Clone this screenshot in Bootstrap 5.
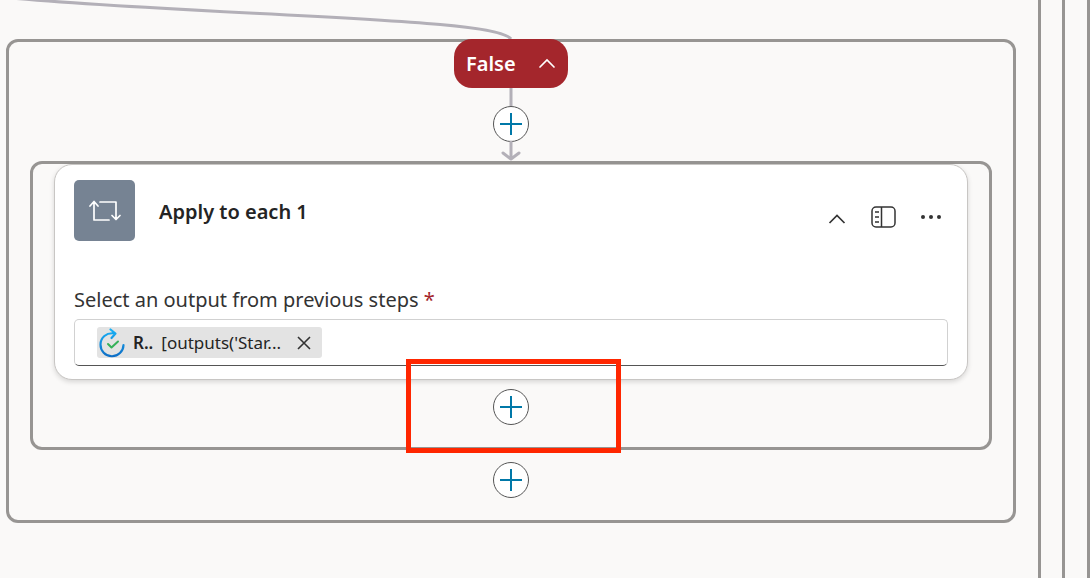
<!DOCTYPE html>
<html lang="en">
<head>
<meta charset="utf-8">
<meta name="viewport" content="width=device-width, initial-scale=1">
<title>Flow designer</title>
<link href="https://cdn.jsdelivr.net/npm/bootstrap@5.3.0/dist/css/bootstrap.min.css" rel="stylesheet">
<style>
  body { background: #faf9f8; color: #242424; font-family: "Noto Sans", "Open Sans", sans-serif; font-size: 20px; line-height: 28px; }
  svg { display: block; overflow: visible; }
  .parent-scope { border-right: 3px solid #979593; padding-right: 22px; }
  .parent-scope .parent-scope { padding-right: 21px; }
  .parent-scope .parent-scope .parent-scope { padding-right: 22px; }
  .branch { padding-left: 6px; }
  .incoming { height: 39px; }
  .scope { border: 3px solid #979593; border-radius: 12px; padding: 0 21px 22px; }
  .edge-line { stroke: #b3b0b8; stroke-width: 3; fill: none; }
  .btn-false { --bs-btn-bg: #a4262c; --bs-btn-color: #fff; --bs-btn-hover-bg: #8e2026; --bs-btn-hover-color: #fff; --bs-btn-border-width: 0; --bs-btn-font-size: 20px; --bs-btn-font-weight: 600; --bs-btn-line-height: 28px; width: 114px; height: 49px; border-radius: 18px; padding: 0 13px 0 12px; margin-top: -3px; }
  .btn-add { width: 36px; height: 36px; background: #fff; border: 1px solid #555; color: #0078a8; }
  .after-step { margin-top: 9px; }
  .after-scope { margin-top: 12px; }
  .step { border: 1px solid #c8c6c4; border-radius: 18px; padding: 15px 19px 13px; box-shadow: 0 2px 5px rgba(0,0,0,.14); }
  .step-icon { width: 61px; height: 61px; border-radius: 5px; background: #768393; }
  .step-title { font-size: 20px; line-height: 28px; font-weight: 600; margin-left: 24px; padding-top: 2px; }
  .tools { gap: 13px; }
  .tool { width: 34px; height: 32px; color: #333; }
  .field-label { margin-top: 45px; margin-bottom: 5px; color: #333; }
  .required { color: #a4262c; }
  .token-field { height: 47px; border: 1px solid #d1d1d1; border-bottom-color: #555; border-radius: 5px; padding: 0 22px; }
  .token { width: 225px; height: 31px; background: #e3e3e3; border-radius: 3px; padding: 0 11px 0 2px; font-size: 17px; line-height: 24px; white-space: nowrap; }
  .token-input { min-width: 0; outline: 0; }
  .highlight { width: 215px; height: 94px; top: -30px; left: -87px; border: 5px solid #ff2600; pointer-events: none; }
</style>
</head>
<body>
<div class="parent-scope min-vh-100 d-flex">
 <div class="parent-scope flex-grow-1 d-flex">
  <div class="parent-scope flex-grow-1">
   <main class="branch">
    <div class="incoming">
      <svg class="w-50 h-100" viewBox="0 0 506 39" preserveAspectRatio="none" aria-hidden="true"><path class="edge-line" d="M-6-3C130 10 330 15 435 24.500Q499 30 506 39"/></svg>
    </div>
    <section class="scope d-flex flex-column align-items-center">
      <button class="btn btn-false d-flex align-items-center justify-content-between" type="button" aria-expanded="true">False
        <svg width="16" height="12" fill="none" stroke="currentColor" stroke-width="1.7" stroke-linecap="round"><path d="m1 9 7-7 7 7"/></svg>
      </button>
      <svg width="36" height="18" aria-hidden="true"><path class="edge-line" d="M18 0v18"/></svg>
      <button class="btn btn-add rounded-circle p-0 d-flex align-items-center justify-content-center" type="button" aria-label="Add an action">
        <svg width="22" height="22" stroke="currentColor" stroke-width="2"><path d="M11 0v22M0 11h22"/></svg>
      </button>
      <svg width="36" height="19" aria-hidden="true"><path class="edge-line" d="M18 0v17M10 11l8 6 8-6" stroke-linejoin="round" stroke-linecap="round"/></svg>

      <section class="scope w-100 d-flex flex-column align-items-center">
        <article class="step bg-white w-100">
          <header class="d-flex align-items-center">
            <div class="step-icon d-flex align-items-center justify-content-center">
              <svg width="32" height="22" fill="none" stroke="#fff" stroke-width="1.7" stroke-linecap="round" stroke-linejoin="round" aria-hidden="true"><path d="M1 6l4-4.500L9 6M5 2v18h15M11 2h16v17M23 15.500l4 4 4-4"/></svg>
            </div>
            <h1 class="step-title mb-0 me-auto">Apply to each 1</h1>
            <div class="tools d-flex mt-2 pt-1">
              <button class="btn tool p-0 border-0 d-flex align-items-center justify-content-center" type="button" aria-label="Collapse">
                <svg class="mt-1" width="16" height="10" fill="none" stroke="currentColor" stroke-width="1.7"><path d="m.5 9 7.500-7.500L15.500 9"/></svg>
              </button>
              <button class="btn tool p-0 border-0 d-flex align-items-center justify-content-center" type="button" aria-label="Open panel">
                <svg width="26" height="22" fill="none" stroke="currentColor" stroke-width="1.5"><rect x="1" y="1" width="23" height="20" rx="4"/><path d="M10.500 1v20M4 6h4M4 11h4M4 16h4"/></svg>
              </button>
              <button class="btn tool p-0 border-0 d-flex align-items-center justify-content-center" type="button" aria-label="More options">
                <svg width="20" height="4" fill="currentColor"><circle cx="2" cy="2" r="2"/><circle cx="10" cy="2" r="2"/><circle cx="18" cy="2" r="2"/></svg>
              </button>
            </div>
          </header>
          <label class="field-label d-block" for="source">Select an output from previous steps <span class="required">*</span></label>
          <div class="token-field d-flex align-items-center">
            <span class="token d-flex align-items-center flex-shrink-0">
              <svg width="26" height="30" fill="none" stroke-linecap="round" stroke-linejoin="round" aria-hidden="true">
                <defs><linearGradient id="ring" x1="0" y1="0" x2="0" y2="1"><stop stop-color="#19b0f5"/><stop offset="1" stop-color="#0f6fc6"/></linearGradient></defs>
                <path d="M16 5.500C7 4 1.500 10 1.500 16.500A11.500 11.500 0 0 0 24.500 17M11.500 1.500l5 4-4 4.500" stroke="url(#ring)" stroke-width="2.200"/>
                <path d="m9 16 3.500 3.500 6.500-6" stroke="#35b158" stroke-width="2"/>
              </svg>
              <b class="fw-semibold ms-2">R..</b><span class="ms-2">[outputs('Star...</span>
              <button class="btn p-0 border-0 ms-auto" type="button" aria-label="Remove">
                <svg width="14" height="14" stroke="#333" stroke-width="1.6"><path d="m1 1 12 12M13 1 1 13"/></svg>
              </button>
            </span>
            <input class="token-input flex-grow-1 border-0 bg-transparent" id="source" type="text">
          </div>
        </article>
        <div class="after-step position-relative">
          <button class="btn btn-add rounded-circle p-0 d-flex align-items-center justify-content-center" type="button" aria-label="Add an action inside the loop">
            <svg width="22" height="22" stroke="currentColor" stroke-width="2"><path d="M11 0v22M0 11h22"/></svg>
          </button>
          <div class="highlight position-absolute"></div>
        </div>
      </section>

      <button class="after-scope btn btn-add rounded-circle p-0 d-flex align-items-center justify-content-center" type="button" aria-label="Add an action after the loop">
        <svg width="22" height="22" stroke="currentColor" stroke-width="2"><path d="M11 0v22M0 11h22"/></svg>
      </button>
    </section>
   </main>
  </div>
 </div>
</div>
<script src="https://cdn.jsdelivr.net/npm/bootstrap@5.3.0/dist/js/bootstrap.bundle.min.js"></script>
</body>
</html>
